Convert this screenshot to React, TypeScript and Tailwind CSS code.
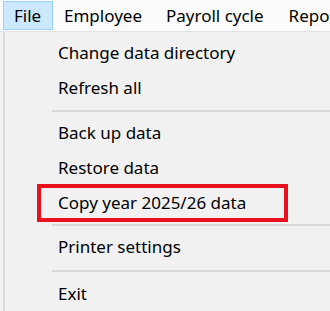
import React from "react";

const font = { fontFamily: '"Noto Sans", "Open Sans", sans-serif' };

function Item({ label, h = 35, boxed = false }: { label: string; h?: number; boxed?: boolean }) {
  return (
    <div className="relative flex items-center pl-[58px] text-[17px] text-black" style={{ height: h }}>
      {boxed && (
        <div className="absolute left-[37px] -top-[1px] h-[38px] w-[251px] border-[4px] border-[#e8121f]" />
      )}
      <span className="relative">{label}</span>
    </div>
  );
}

function Sep({ h, line }: { h: number; line: number }) {
  return (
    <div className="relative" style={{ height: h }}>
      <div className="absolute left-[52px] right-0 h-[2px] bg-[#d8d8d8]" style={{ top: line }} />
    </div>
  );
}

export default function App() {
  return (
    <div className="w-[330px] h-[311px] overflow-hidden bg-[#f1f1f1] select-none" style={font}>
      <div className="flex h-[32px] items-center overflow-hidden bg-[#fcfcfc] border-b border-[#e3e3e3] text-[17px] text-black whitespace-nowrap">
        <div className="ml-[3px] flex h-[29px] w-[50px] shrink-0 items-center border border-[#99d1ff] bg-[#cce8ff] pl-[10px]">File</div>
        <div className="ml-[11px] shrink-0">Employee</div>
        <div className="ml-[24px] shrink-0">Payroll cycle</div>
        <div className="ml-[25px] shrink-0">Reports</div>
      </div>
      <div className="flex">
        <div className="ml-[3px] w-[2px] bg-[#dadada]" />
        <div className="flex-1 -ml-[5px] pt-[3px]">
          <Item label="Change data directory" />
          <Item label="Refresh all" />
          <Sep h={10} line={5} />
          <Item label="Back up data" />
          <Item label="Restore data" />
          <Item label="Copy year 2025/26 data" h={36} boxed />
          <Sep h={8} line={3} />
          <Item label="Printer settings" />
          <Sep h={12} line={6} />
          <Item label="Exit" />
        </div>
      </div>
    </div>
  );
}
